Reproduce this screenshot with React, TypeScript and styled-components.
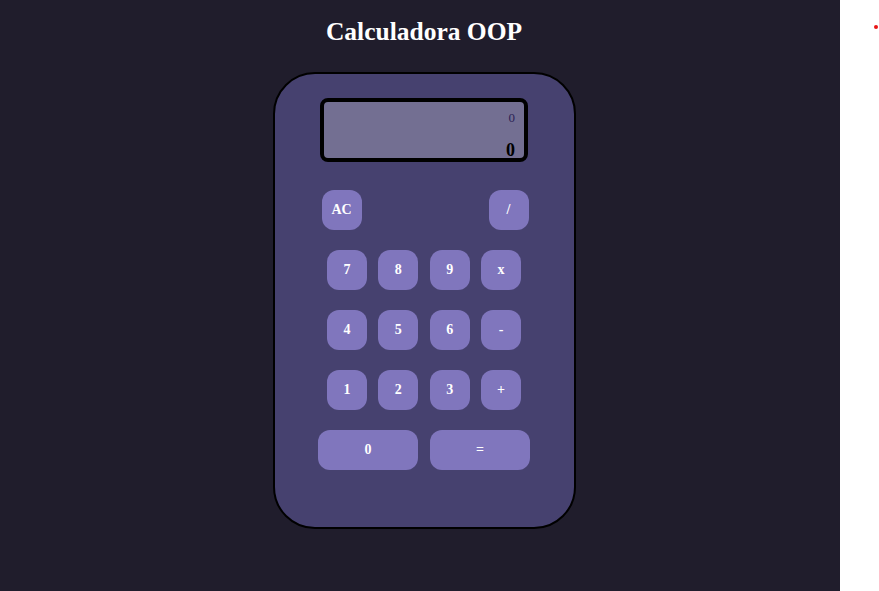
import React from "react";
import styled, { createGlobalStyle } from "styled-components";

const Global = createGlobalStyle`
  html, body { margin: 0; padding: 0; background: #ffffff; }
  body { font-family: "Liberation Serif", "Times New Roman", serif; }
`;

const Page = styled.div`
  width: 840px;
  min-height: 591px;
  background: #201d2c;
  box-sizing: border-box;
  padding-left: 8px;
  display: flex;
  flex-direction: column;
  align-items: center;
`;

const Title = styled.h1`
  margin: 17px 0 25px;
  font-size: 25.5px;
  font-weight: bold;
  color: #ffffff;
  line-height: 30px;
`;

const Dot = styled.div`
  position: absolute;
  left: 874px;
  top: 25px;
  width: 4px;
  height: 4px;
  border-radius: 50%;
  background: #e81414;
`;

const Body = styled.div`
  width: 303px;
  height: 457px;
  box-sizing: border-box;
  border: 2px solid #000;
  border-radius: 42px;
  background: #46416f;
  display: flex;
  flex-direction: column;
  align-items: center;
  padding-top: 24px;
`;

const Display = styled.div`
  width: 208px;
  height: 64px;
  box-sizing: border-box;
  border: 4px solid #000;
  border-radius: 8px;
  background: #736f92;
  display: flex;
  flex-direction: column;
  align-items: flex-end;
  padding: 8px 9px 0 0;
  margin-bottom: 28px;
`;

const Prev = styled.div`
  font-size: 13px;
  line-height: 16px;
  color: #2c1f55;
`;

const Current = styled.div`
  margin-top: 15px;
  font-size: 18px;
  font-weight: bold;
  line-height: 18px;
  color: #000;
`;

const Keys = styled.div`
  display: flex;
  flex-direction: column;
  align-items: center;
  gap: 20px;
`;

const Row = styled.div<{ $w: number; $shift?: number }>`
  width: ${(p) => p.$w}px;
  margin-left: ${(p) => p.$shift ?? 0}px;
  display: flex;
  justify-content: space-between;
`;

const Key = styled.button<{ $wide?: boolean }>`
  width: ${(p) => (p.$wide ? 100 : 40)}px;
  height: 40px;
  border: none;
  border-radius: 12px;
  background: #8076bd;
  color: #ffffff;
  font-family: "Liberation Serif", "Times New Roman", serif;
  font-weight: bold;
  font-size: 14px;
  padding: 0;
  cursor: pointer;
`;

export default function App() {
  return (
    <>
      <Global />
      <Dot />
      <Page>
        <Title>Calculadora OOP</Title>
        <Body>
          <Display>
            <Prev>0</Prev>
            <Current>0</Current>
          </Display>
          <Keys>
            <Row $w={207} $shift={2}>
              <Key>AC</Key>
              <Key>/</Key>
            </Row>
            <Row $w={194}>
              <Key>7</Key>
              <Key>8</Key>
              <Key>9</Key>
              <Key>x</Key>
            </Row>
            <Row $w={194}>
              <Key>4</Key>
              <Key>5</Key>
              <Key>6</Key>
              <Key>-</Key>
            </Row>
            <Row $w={194}>
              <Key>1</Key>
              <Key>2</Key>
              <Key>3</Key>
              <Key>+</Key>
            </Row>
            <Row $w={212}>
              <Key $wide>0</Key>
              <Key $wide>=</Key>
            </Row>
          </Keys>
        </Body>
      </Page>
    </>
  );
}
